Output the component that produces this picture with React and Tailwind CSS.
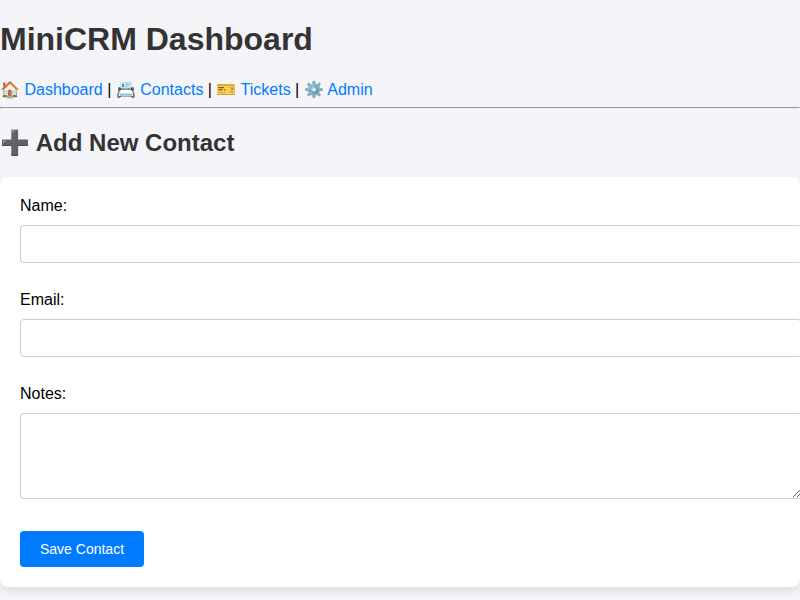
const link = "text-[#007bff]";

function Field({ label, area }) {
  return (
    <div className={area ? "h-[150px]" : "h-[94px]"}>
      <label className="block h-[18px] leading-[18px]">{label}</label>
      {area ? (
        <textarea className="mt-[10px] block h-[86px] w-[782px] resize rounded-[4px] border border-[#ccc] bg-white p-[10px] outline-none" />
      ) : (
        <input className="mt-[10px] block h-[38px] w-[782px] rounded-[4px] border border-[#ccc] bg-white p-[10px] outline-none" />
      )}
    </div>
  );
}

export default function App() {
  return (
    <div className="h-[600px] w-[800px] overflow-hidden bg-[#f4f4f9] font-['Liberation_Sans',Arial,sans-serif] text-[16px] text-black">
      <h1 className="pt-[21px] text-[32px] leading-[37px] font-bold text-[#333]">MiniCRM Dashboard</h1>
      <nav className="mt-[22px] h-[20px] leading-[20px] whitespace-nowrap">
        🏠 <a className={link}>Dashboard</a> | 📇 <a className={link}>Contacts</a> | 🎫 <a className={link}>Tickets</a> | ⚙️ <a className={link}>Admin</a>
      </nav>
      <hr className="mt-[7px] h-[2px] border border-t-[#9a9a9a] border-r-[#eee] border-b-[#eee] border-l-[#9a9a9a]" />
      <h2 className="mt-[20px] h-[28px] text-[24px] leading-[28px] font-bold text-[#333]">➕ Add New Contact</h2>
      <form className="mt-[20px] h-[410px] rounded-[8px] bg-white px-[20px] pt-[20px] shadow-[0_4px_8px_rgba(0,0,0,0.1)]">
        <Field label="Name:" />
        <Field label="Email:" />
        <Field label="Notes:" area />
        <button type="button" className="mt-[-4px] block h-[36px] w-[124px] rounded-[4px] bg-[#007bff] text-[14px] text-white">Save Contact</button>
      </form>
    </div>
  );
}
